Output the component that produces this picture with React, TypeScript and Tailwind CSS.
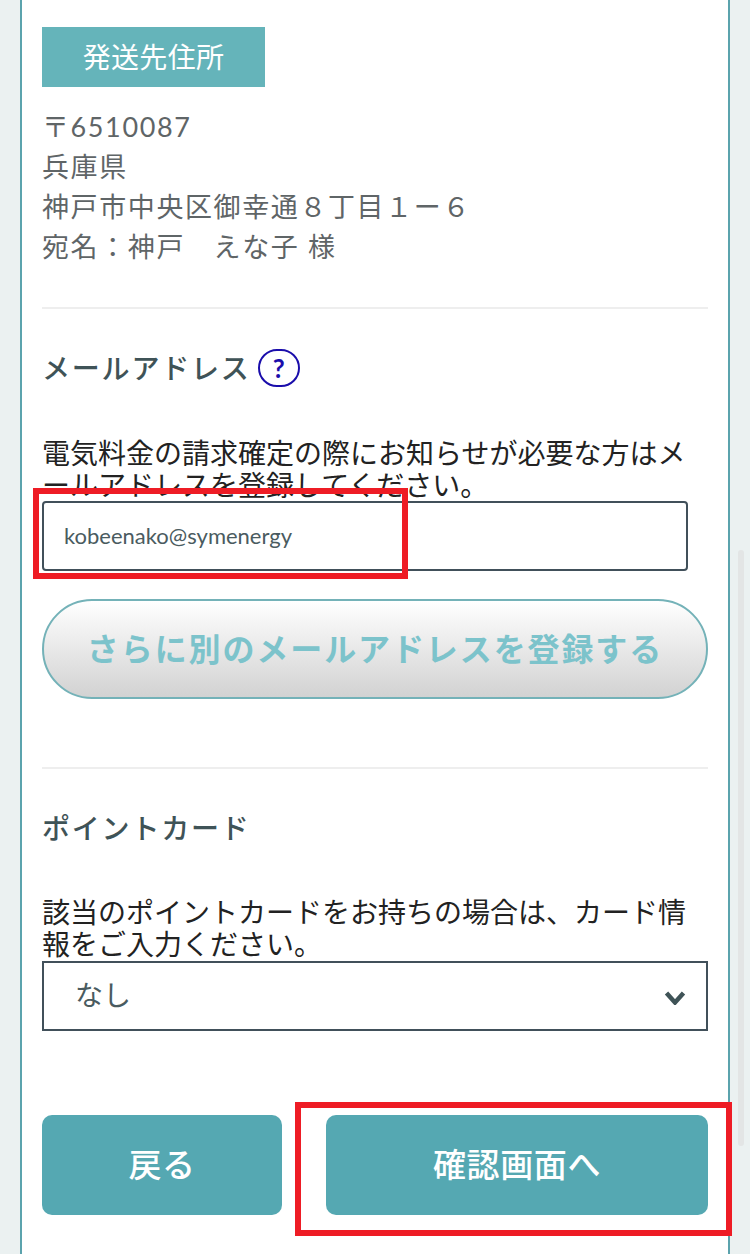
const font = { fontFamily: 'Lato, "Noto Sans CJK JP", sans-serif' };

export default function App() {
  return (
    <div className="relative w-[750px] h-[1254px] overflow-hidden bg-[#ebf1f1]" style={font}>
      <div className="ml-[20px] w-[710px] h-[1254px] border-x-2 border-[#5ba3ad] bg-white px-[20px] pt-[27px]">
        <div className="flex h-[60px] w-[223px] items-center justify-center bg-[#65b4ba] text-[28px] tracking-[0.3px] text-white">
          発送先住所
        </div>
        <div className="mt-[20px] text-[27px] leading-[40px] tracking-[1.6px] text-[#5f6567]">
          <p>〒6510087</p>
          <p>兵庫県</p>
          <p>神戸市中央区御幸通８丁目１ー６</p>
          <p>宛名：神戸　えな子 様</p>
        </div>
        <hr className="mt-[40px] border-t-2 border-[#eeeeee]" />
        <div className="mt-[40px] flex h-[38px] items-center gap-[7px]">
          <h2 className="text-[28px] font-medium tracking-[1.8px] text-[#3f5357]">メールアドレス</h2>
          <span className="flex h-[38px] w-[42px] items-center justify-center rounded-full border-2 border-[#1a0dab] text-[26px] font-bold leading-none text-[#1a0dab]">
            ?
          </span>
        </div>
        <p className="mt-[50px] text-[28px] leading-[32px] text-[#222222]">
          電気料金の請求確定の際にお知らせが必要な方はメールアドレスを登録してください。
        </p>
        <div className="flex h-[70px] w-[646px] items-center rounded-[4px] border-2 border-[#41505a] px-[20px] pb-[2px] text-[22px] text-[#4a5b60]">
          kobeenako@symenergy
        </div>
        <button className="mt-[28px] flex h-[100px] w-[666px] items-center justify-center rounded-[50px] border-2 border-[#74b2b8] bg-gradient-to-b from-white to-[#d2d2d2] text-[32px] font-bold tracking-[1.9px] text-[#7cc3cb]">
          さらに別のメールアドレスを登録する
        </button>
        <hr className="mt-[68px] border-t-2 border-[#eeeeee]" />
        <h2 className="mt-[41px] h-[36px] text-[28px] font-medium leading-[36px] tracking-[1.8px] text-[#3f5357]">
          ポイントカード
        </h2>
        <p className="mt-[50px] text-[28px] leading-[32px] text-[#222222]">
          該当のポイントカードをお持ちの場合は、カード情報をご入力ください。
        </p>
        <div className="mt-[1px] flex h-[70px] w-[666px] items-center justify-between border-2 border-[#41505a] pb-[2px] pl-[31px] pr-[20px] text-[28px] text-[#4a5b60]">
          <span>なし</span>
          <svg width="22" height="14" viewBox="0 0 22 14" fill="none" className="mt-[6px]">
            <path d="M2.5 2 L11 11.5 L19.5 2" stroke="#3f5357" strokeWidth="4.5" />
          </svg>
        </div>
        <div className="mt-[84px] flex gap-[44px]">
          <button className="flex h-[100px] w-[240px] items-center justify-center rounded-[10px] bg-[#55a8b2] text-[33px] font-medium tracking-[0.4px] text-white">
            戻る
          </button>
          <button className="flex h-[100px] w-[382px] items-center justify-center rounded-[10px] bg-[#55a8b2] text-[33px] font-medium tracking-[0.6px] text-white">
            確認画面へ
          </button>
        </div>
      </div>
      <div className="absolute left-[738px] top-[550px] h-[596px] w-[6px] rounded-full bg-[#e3e5e5]" />
      <div className="absolute left-[33px] top-[488px] h-[91px] w-[375px] border-[6px] border-[#ee1c25]" />
      <div className="absolute left-[295px] top-[1102px] h-[134px] w-[437px] border-[6px] border-[#ee1c25]" />
    </div>
  );
}
